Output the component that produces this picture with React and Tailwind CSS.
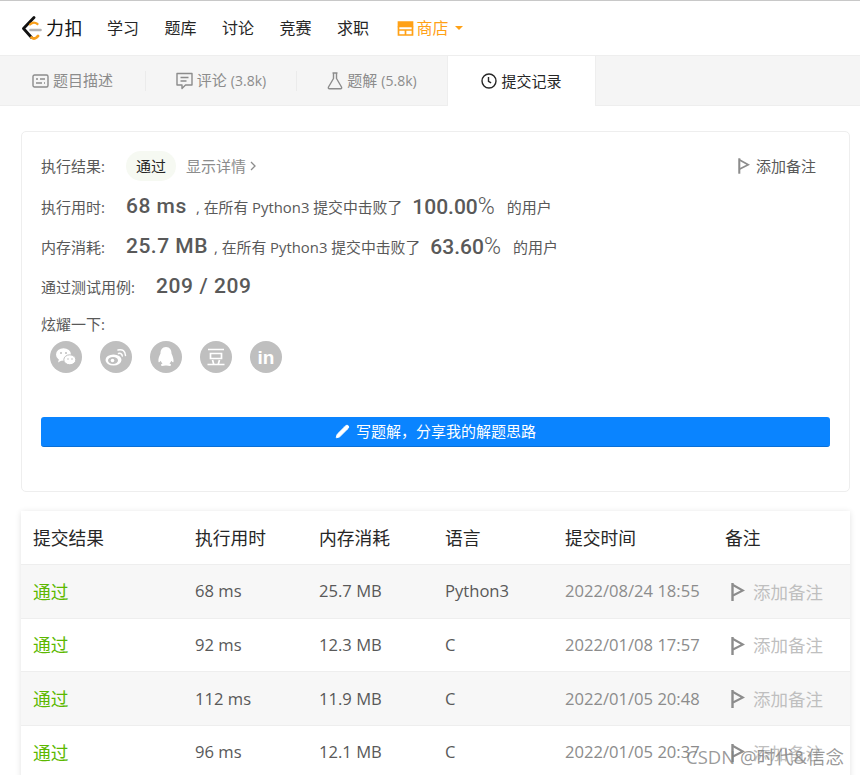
import React from "react";
import { Pencil } from "lucide-react";

const FONT = "font-['Open_Sans','Noto_Sans_CJK_SC',sans-serif]";
const DIGITS = "font-['Roboto','Noto_Sans_CJK_SC',sans-serif]";

const NAV = ["学习", "题库", "讨论", "竞赛", "求职"];

const ROWS = [
  { time: "68 ms", mem: "25.7 MB", lang: "Python3", at: "2022/08/24 18:55" },
  { time: "92 ms", mem: "12.3 MB", lang: "C", at: "2022/01/08 17:57" },
  { time: "112 ms", mem: "11.9 MB", lang: "C", at: "2022/01/05 20:48" },
  { time: "96 ms", mem: "12.1 MB", lang: "C", at: "2022/01/05 20:37" },
];

function Logo() {
  return (
    <svg width="22" height="24" viewBox="0 0 22 24" fill="none">
      <path d="M13 1.500 L2.500 12.500 L10.500 21.500" stroke="#111" strokeWidth="2.800" strokeLinejoin="round" strokeLinecap="round" />
      <path d="M10.500 21.500 Q13 23.500 15.500 21.500 L17 20" stroke="#f89f1b" strokeWidth="2.800" strokeLinecap="round" />
      <path d="M9 8.500 Q12.500 5 16.500 8" stroke="#f89f1b" strokeWidth="2.200" strokeLinecap="round" />
      <path d="M9.500 14 H19.500" stroke="#b3b3b3" strokeWidth="2.600" strokeLinecap="round" />
    </svg>
  );
}

function StoreIcon() {
  return (
    <svg width="17" height="15" viewBox="0 0 17 15" fill="none" stroke="#ffa116" strokeWidth="1.700">
      <path d="M1.500 1h14v4.500h-14z" fill="#ffa116" />
      <path d="M1.500 5.500V14h14V5.500M1.500 9h14M8.500 9v5" />
    </svg>
  );
}

function DescIcon() {
  return (
    <svg width="17" height="14" viewBox="0 0 17 14" fill="none" stroke="#8c8c8c" strokeWidth="1.400">
      <rect x="1" y="1" width="15" height="12" rx="1.500" />
      <path d="M4 5h2M8 5h5M4 9h6M12 9h1" />
    </svg>
  );
}

function CommentIcon() {
  return (
    <svg width="17" height="18" viewBox="0 0 17 18" fill="none" stroke="#8c8c8c" strokeWidth="1.400">
      <path d="M1 1.500h15v11.500H9.500L6 16.500V13H1z" strokeLinejoin="round" />
      <path d="M4.500 5.500h8M4.500 9h6" />
    </svg>
  );
}

function FlaskIcon() {
  return (
    <svg width="16" height="18" viewBox="0 0 16 18" fill="none" stroke="#8c8c8c" strokeWidth="1.400">
      <path d="M5.500 1h5M6.500 1v5.500L1.500 15q-.6 1.700 1 1.700h11q1.600 0 1-1.700L9.500 6.500V1" strokeLinejoin="round" />
    </svg>
  );
}

function ClockIcon() {
  return (
    <svg width="16" height="16" viewBox="0 0 16 16" fill="none" stroke="#262626" strokeWidth="1.400">
      <circle cx="8" cy="8" r="7" />
      <path d="M7.500 4v4.300l2.600 1.600" />
    </svg>
  );
}

function Flag({ className }) {
  return (
    <svg className={className} viewBox="0 0 14 18" fill="none" stroke="#8c8c8c">
      <path d="M1.500 0v18" strokeWidth="2.400" />
      <path d="M2 2l10 5.500L2 12.500" strokeWidth="2" strokeLinejoin="miter" />
    </svg>
  );
}

function Tab({ icon, label, count, divider }) {
  return (
    <div className={`flex items-center justify-center gap-1 h-[20px] text-[15px] text-[#8c8c8c] ${divider ? "border-r border-[#ebebeb]" : ""}`}>
      {icon}
      <span>{label}</span>
      {count && <span className="text-[14px]">{count}</span>}
    </div>
  );
}

function Social({ children }) {
  return (
    <div className="w-[32px] h-[32px] rounded-full bg-[#bfbfbf] flex items-center justify-center">
      {children}
    </div>
  );
}

function Stat({ label, value, mid, pct, valueWidth }) {
  return (
    <div className="flex items-center h-[20px] text-[15px] text-[#595959]">
      <span className="w-[85px] whitespace-nowrap">{label}</span>
      <span className={`${DIGITS} ${valueWidth} text-[21px] font-medium tracking-[0.5px] whitespace-nowrap`}>{value}</span>
      <span className="text-[14.85px] whitespace-nowrap">{mid}</span>
      <span className={`${DIGITS} ml-[10px] text-[21px] font-medium whitespace-nowrap`}>
        {pct}<span className="font-light text-[23px]">%</span>
      </span>
      <span className="ml-[12px] whitespace-nowrap">的用户</span>
    </div>
  );
}

const GRID = "grid grid-cols-[162px_124px_126px_120px_160px_1fr] items-center pl-3";

export default function App() {
  return (
    <div className={`${FONT} relative w-[860px] h-[775px] overflow-hidden bg-white`}>
      {/* top nav */}
      <div className="h-[55px] border-t border-[#c8c8c8] flex items-center pl-[21px]">
        <Logo />
        <span className="ml-[3px] text-[18px] text-[#111] tracking-[0.5px] w-[40px] whitespace-nowrap">力扣</span>
        <div className="ml-[21px] flex items-center gap-[25.5px] text-[16px] leading-none text-[#262626]">
          {NAV.map((n) => <span key={n} className="w-[32px] whitespace-nowrap">{n}</span>)}
          <span className="flex items-center gap-[3px] ml-[2px] text-[#ffa116]">
            <StoreIcon />
            <span>商店</span>
            <span className="ml-[3px] w-0 h-0 border-x-[4px] border-x-transparent border-t-[4px] border-t-[#ffa116]" />
          </span>
        </div>
      </div>

      {/* tabs */}
      <div className="h-[51px] bg-[#f5f5f5] border-y border-[#eeeeee] flex items-center">
        <div className="w-[146px]"><Tab icon={<DescIcon />} label="题目描述" divider /></div>
        <div className="w-[151px]"><Tab icon={<CommentIcon />} label="评论" count="(3.8k)" divider /></div>
        <div className="w-[150px]"><Tab icon={<FlaskIcon />} label="题解" count="(5.8k)" /></div>
        <div className="w-[149px] h-[50px] mt-px bg-white border-x border-[#eeeeee] flex items-center justify-center gap-1 text-[15px] text-[#262626]">
          <ClockIcon />
          <span>提交记录</span>
        </div>
      </div>

      <div className="px-[21px] pt-[25px]">
        {/* result card */}
        <div className="w-[829px] h-[361px] border border-[#eeeeee] rounded-[5px] pl-[19px] pr-[19px]">
          <div className="flex items-center h-[28px] mt-[20px] text-[15px] text-[#595959]">
            <span className="w-[85px]">执行结果:</span>
            <span className="w-[50px] h-[30px] rounded-full bg-[#f6f9f2] flex items-center justify-center text-[#262626]">通过</span>
            <span className="ml-[10px] text-[#8c8c8c]">显示详情</span>
            <svg className="ml-[4px]" width="6" height="10" viewBox="0 0 6 10" fill="none" stroke="#8c8c8c" strokeWidth="1.300">
              <path d="M1 1l4 4-4 4" />
            </svg>
            <div className="ml-auto mr-[14px] flex items-center gap-[6px]">
              <Flag className="w-[12px] h-[16px]" />
              <span>添加备注</span>
            </div>
          </div>

          <div className="mt-[17px] flex flex-col gap-[20px]">
            <Stat label="执行用时:" value="68 ms" mid=", 在所有 Python3 提交中击败了" pct="100.00" valueWidth="w-[70px]" />
            <Stat label="内存消耗:" value="25.7 MB" mid=", 在所有 Python3 提交中击败了" pct="63.60" valueWidth="w-[88px]" />
            <div className="flex items-center h-[20px] text-[15px] text-[#595959]">
              <span className="w-[115px] whitespace-nowrap">通过测试用例:</span>
              <span className={`${DIGITS} text-[21px] font-medium tracking-[0.6px] whitespace-pre`}>209 / 209</span>
            </div>
          </div>

          <div className="mt-[17px] text-[15px] leading-[20px] text-[#595959]">炫耀一下:</div>
          <div className="mt-[7px] ml-[9px] flex gap-[18px]">
            <Social>
              <svg width="22" height="20" viewBox="0 0 22 20" fill="#fff">
                <ellipse cx="8.500" cy="7.500" rx="7.500" ry="6.300" />
                <path d="M4 12l-1 3.500 4-2.200z" />
                <ellipse cx="14.800" cy="12.800" rx="6" ry="5" stroke="#bfbfbf" strokeWidth="1" />
                <circle cx="6" cy="6" r="1" fill="#bfbfbf" />
                <circle cx="11" cy="6" r="1" fill="#bfbfbf" />
                <circle cx="13" cy="12" r=".8" fill="#bfbfbf" />
                <circle cx="17" cy="12" r=".8" fill="#bfbfbf" />
              </svg>
            </Social>
            <Social>
              <svg width="24" height="20" viewBox="0 0 24 20" fill="none">
                <ellipse cx="9.500" cy="13" rx="8" ry="5.500" fill="#fff" />
                <ellipse cx="9" cy="13.500" rx="5" ry="3.400" fill="#bfbfbf" />
                <circle cx="8.500" cy="13.500" r="1.800" fill="#fff" />
                <path d="M14 3q7-1.500 7.500 5.500M14.500 6.500q3.500-.7 3.800 2.500" stroke="#fff" strokeWidth="1.500" strokeLinecap="round" />
              </svg>
            </Social>
            <Social>
              <svg width="20" height="22" viewBox="0 0 20 22" fill="#fff">
                <path d="M10 1c-4 0-5.500 3-5.500 6.500C3 10.500 2 13 2.500 16q1 .8 2.200-1.200 .5 1.700 1.800 2.700-2 .7-1.500 2 .8.800 4.500-.1h1q3.700.9 4.500.1.500-1.300-1.500-2 1.300-1 1.800-2.700 1.200 2 2.200 1.200.5-3-2-8.500C15.500 4 14 1 10 1z" />
              </svg>
            </Social>
            <Social>
              <svg width="20" height="20" viewBox="0 0 20 20" fill="none" stroke="#fff" strokeWidth="1.700">
                <path d="M2 2.500h16M4.500 6.500h11v5h-11zM6.500 13l1.200 4M13.500 13l-1.200 4M1.500 17.500h17" />
              </svg>
            </Social>
            <Social>
              <span className="font-['Liberation_Sans',sans-serif] text-[19px] font-bold text-white leading-none">in</span>
            </Social>
          </div>

          <button className="mt-[44px] w-[789px] h-[30px] rounded-[3px] bg-[#0a84ff] border-b border-[#0a6fd6] flex items-center justify-center gap-[6px] text-[15px] text-white">
            <Pencil size={15} fill="#fff" strokeWidth={1.500} />
            <span>写题解{"\uFF0C"}分享我的解题思路</span>
          </button>
        </div>

        {/* submissions table */}
        <div className="mt-[19px] w-[829px] shadow-[0_1px_6px_rgba(0,0,0,0.12)] bg-white">
          <div className={`${GRID} h-[54px] pt-[2px] text-[17.75px] text-[#262626] border-b border-[#eeeeee]`}>
            <span>提交结果</span>
            <span>执行用时</span>
            <span>内存消耗</span>
            <span>语言</span>
            <span>提交时间</span>
            <span>备注</span>
          </div>
          {ROWS.map((r, i) => (
            <div key={r.at} className={`${GRID} h-[53.7px] pt-[1px] text-[16.6px] border-b border-[#eeeeee] ${i % 2 === 0 ? "bg-[#f7f7f7]" : "bg-white"}`}>
              <span className="text-[17.75px] text-[#5cb800]">通过</span>
              <span className="text-[#595959]">{r.time}</span>
              <span className="text-[#595959]">{r.mem}</span>
              <span className="text-[#595959]">{r.lang}</span>
              <span className="text-[#8c8c8c]">{r.at}</span>
              <span className="flex items-center gap-[8px] pl-[6px] text-[17.5px] text-[#bfbfbf]">
                <Flag className="w-[14px] h-[18px]" />
                <span>添加备注</span>
              </span>
            </div>
          ))}
        </div>
      </div>

      {/* csdn watermark */}
      <span className="absolute left-[686px] top-[745px] text-[18.5px] leading-[24px] text-[#7f7f7f]/80 whitespace-nowrap">CSDN @时代&信念</span>
    </div>
  );
}
